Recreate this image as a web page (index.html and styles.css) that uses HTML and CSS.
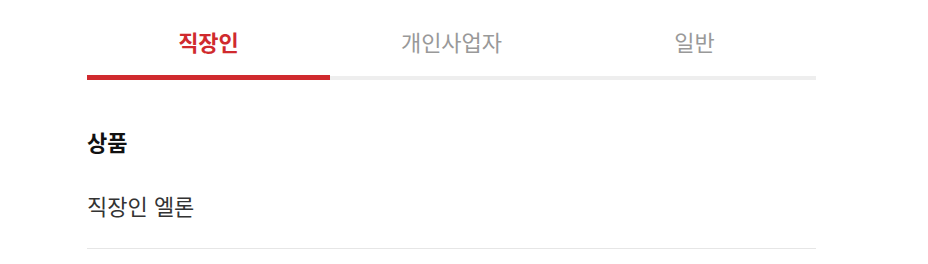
FILE: index.html
```html
<!DOCTYPE html>
<html lang="ko">
<head>
<meta charset="utf-8">
<link rel="stylesheet" href="styles.css">
</head>
<body>
<div class="wrap">
  <div class="tabs">
    <div class="tab active">직장인</div>
    <div class="tab">개인사업자</div>
    <div class="tab">일반</div>
  </div>
  <div class="section">
    <h2 class="title">상품</h2>
    <div class="item">직장인 엘론</div>
  </div>
</div>
</body>
</html>
```

FILE: styles.css
```css
html, body {
  margin: 0;
  padding: 0;
  background: #fff;
}
body {
  font-family: "Noto Sans CJK KR", "Noto Sans", sans-serif;
}
.wrap {
  width: 729px;
  margin-left: 87px;
}
.tabs {
  display: flex;
  align-items: flex-end;
}
.tab {
  flex: 1;
  text-align: center;
  font-size: 22px;
  line-height: 30px;
  color: #999;
  padding-top: 26px;
  padding-bottom: 20px;
  border-bottom: 4px solid #eeeeee;
}
.tab.active {
  color: #d02a2e;
  font-weight: 700;
  padding-bottom: 19px;
  border-bottom: 5px solid #d02a2e;
}
.section {
  padding-top: 46px;
}
.title {
  margin: 0;
  font-size: 22px;
  line-height: 30px;
  font-weight: 700;
  color: #111;
}
.item {
  margin-top: 34px;
  font-size: 22px;
  line-height: 30px;
  color: #333;
  padding-bottom: 28px;
  border-bottom: 1px solid #e6e6e6;
}
```
